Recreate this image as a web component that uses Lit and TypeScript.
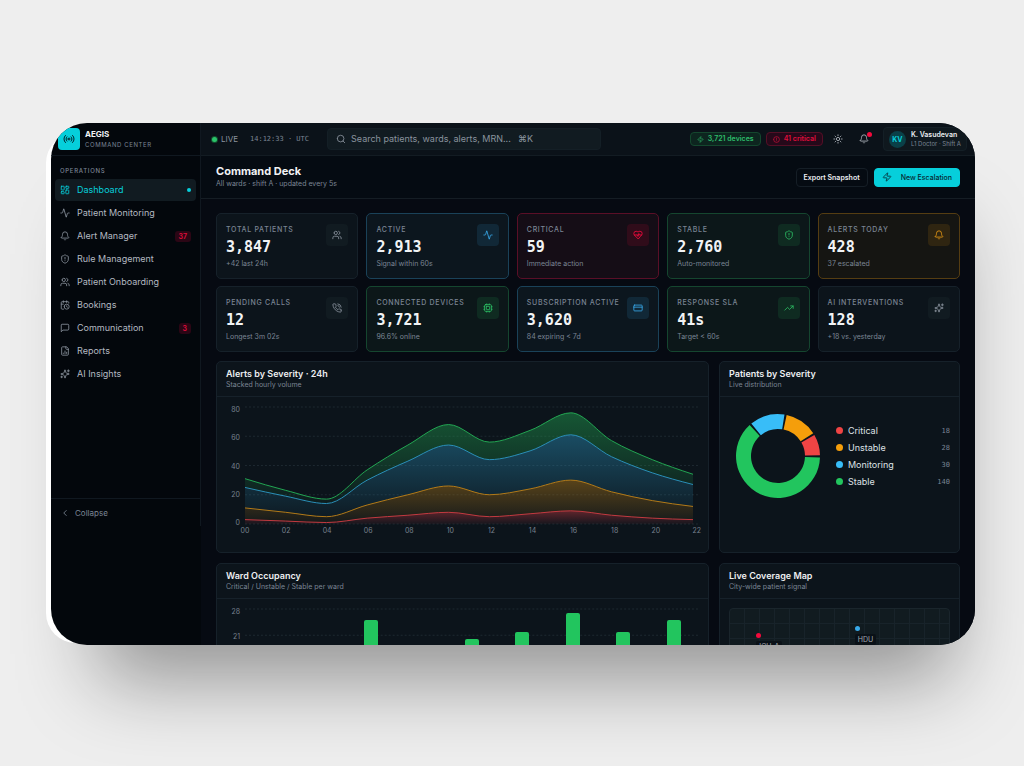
import { css, html, svg, LitElement } from 'lit';
import { customElement, property, state } from 'lit/decorators.js';
import { classMap } from 'lit/directives/class-map.js';

const ICONS: Record<string, string[]> = {
  radio: [
    'M4.9 19.1C1 15.2 1 8.8 4.9 4.9', 'M7.8 16.2c-2.3-2.3-2.3-6.1 0-8.5',
    'M10 12a2 2 0 1 0 4 0a2 2 0 1 0-4 0',
    'M16.2 7.8c2.3 2.3 2.3 6.1 0 8.5', 'M19.1 4.9C23 8.8 23 15.1 19.1 19',
  ],
  dashboard: [
    'M4 3h5a1 1 0 0 1 1 1v7a1 1 0 0 1-1 1H4a1 1 0 0 1-1-1V4a1 1 0 0 1 1-1z',
    'M15 3h5a1 1 0 0 1 1 1v3a1 1 0 0 1-1 1h-5a1 1 0 0 1-1-1V4a1 1 0 0 1 1-1z',
    'M15 12h5a1 1 0 0 1 1 1v7a1 1 0 0 1-1 1h-5a1 1 0 0 1-1-1v-7a1 1 0 0 1 1-1z',
    'M4 16h5a1 1 0 0 1 1 1v3a1 1 0 0 1-1 1H4a1 1 0 0 1-1-1v-3a1 1 0 0 1 1-1z',
  ],
  activity: ['M22 12h-2.48a2 2 0 0 0-1.93 1.46l-2.35 8.36a.25.25 0 0 1-.48 0L9.24 2.18a.25.25 0 0 0-.48 0l-2.35 8.36A2 2 0 0 1 4.49 12H2'],
  bell: [
    'M10.268 21a2 2 0 0 0 3.464 0',
    'M3.262 15.326A1 1 0 0 0 4 17h16a1 1 0 0 0 .74-1.673C19.41 13.956 18 12.499 18 8A6 6 0 0 0 6 8c0 4.499-1.411 5.956-2.738 7.326',
  ],
  shield: [
    'M20 13c0 5-3.5 7.5-7.66 8.95a1 1 0 0 1-.67-.01C7.5 20.5 4 18 4 13V6a1 1 0 0 1 1-1c2 0 4.5-1.2 6.24-2.72a1.17 1.17 0 0 1 1.52 0C14.51 3.81 17 5 19 5a1 1 0 0 1 1 1z',
    'M12 8v4', 'M12 16h.01',
  ],
  users: [
    'M16 21v-2a4 4 0 0 0-4-4H6a4 4 0 0 0-4 4v2', 'M5 7a4 4 0 1 0 8 0a4 4 0 1 0-8 0',
    'M22 21v-2a4 4 0 0 0-3-3.87', 'M16 3.13a4 4 0 0 1 0 7.75',
  ],
  calendar: [
    'M16 14v2.2l1.6 1', 'M16 2v4', 'M21 7.5V6a2 2 0 0 0-2-2H5a2 2 0 0 0-2 2v14a2 2 0 0 0 2 2h3.5',
    'M3 10h5', 'M8 2v4', 'M10 16a6 6 0 1 0 12 0a6 6 0 1 0-12 0',
  ],
  message: ['M21 15a2 2 0 0 1-2 2H7l-4 4V5a2 2 0 0 1 2-2h14a2 2 0 0 1 2 2z'],
  report: [
    'M15 2H6a2 2 0 0 0-2 2v16a2 2 0 0 0 2 2h12a2 2 0 0 0 2-2V7Z', 'M14 2v4a2 2 0 0 0 2 2h4',
    'M8 18v-1', 'M12 18v-6', 'M16 18v-3',
  ],
  sparkles: [
    'M9.937 15.5A2 2 0 0 0 8.5 14.063l-6.135-1.582a.5.5 0 0 1 0-.962L8.5 9.936A2 2 0 0 0 9.937 8.5l1.582-6.135a.5.5 0 0 1 .963 0L14.063 8.5A2 2 0 0 0 15.5 9.937l6.135 1.581a.5.5 0 0 1 0 .964L15.5 14.063a2 2 0 0 0-1.437 1.437l-1.582 6.135a.5.5 0 0 1-.963 0z',
    'M20 2v5', 'M22.5 4.5h-5', 'M4 17v4', 'M6 19H2',
  ],
  phone: [
    'M22 16.92v3a2 2 0 0 1-2.18 2 19.79 19.79 0 0 1-8.63-3.07 19.5 19.5 0 0 1-6-6 19.79 19.79 0 0 1-3.07-8.67A2 2 0 0 1 4.11 2h3a2 2 0 0 1 2 1.72 12.84 12.84 0 0 0 .7 2.81 2 2 0 0 1-.45 2.11L8.09 9.91a16 16 0 0 0 6 6l1.27-1.27a2 2 0 0 1 2.11-.45 12.84 12.84 0 0 0 2.81.7A2 2 0 0 1 22 16.92z',
    'M14.05 2a9 9 0 0 1 8 7.94', 'M14.05 6A5 5 0 0 1 18 10',
  ],
  cpu: [
    'M6 4h12a2 2 0 0 1 2 2v12a2 2 0 0 1-2 2H6a2 2 0 0 1-2-2V6a2 2 0 0 1 2-2z',
    'M9 8h6a1 1 0 0 1 1 1v6a1 1 0 0 1-1 1H9a1 1 0 0 1-1-1V9a1 1 0 0 1 1-1z',
    'M9 2v2', 'M15 2v2', 'M9 20v2', 'M15 20v2', 'M2 9h2', 'M2 15h2', 'M20 9h2', 'M20 15h2',
  ],
  heart: [
    'M19 14c1.49-1.46 3-3.21 3-5.5A5.5 5.5 0 0 0 16.5 3c-1.76 0-3 .5-4.5 2-1.5-1.5-2.74-2-4.5-2A5.5 5.5 0 0 0 2 8.5c0 2.3 1.5 4.05 3 5.5l7 7Z',
    'M3.22 12H9.5l.5-1 2 4.5 2-7 1.5 3.5h5.27',
  ],
  card: ['M4 5h16a2 2 0 0 1 2 2v10a2 2 0 0 1-2 2H4a2 2 0 0 1-2-2V7a2 2 0 0 1 2-2z', 'M2 10h20'],
  trend: ['M22 7 13.5 15.5 8.5 10.5 2 17', 'M16 7h6v6'],
  zap: ['M4 14a1 1 0 0 1-.78-1.63l9.9-10.2a.5.5 0 0 1 .86.46l-1.92 6.02A1 1 0 0 0 13 10h7a1 1 0 0 1 .78 1.63l-9.9 10.2a.5.5 0 0 1-.86-.46l1.92-6.02A1 1 0 0 0 11 14z'],
  alert: ['M2 12a10 10 0 1 0 20 0a10 10 0 1 0-20 0', 'M12 7v5', 'M12 16h.01'],
  sun: [
    'M8 12a4 4 0 1 0 8 0a4 4 0 1 0-8 0', 'M12 2v2', 'M12 20v2', 'm4.93 4.93 1.41 1.41',
    'm17.66 17.66 1.41 1.41', 'M2 12h2', 'M20 12h2', 'm6.34 17.66-1.41 1.41', 'm19.07 4.93-1.41 1.41',
  ],
  search: ['M3 11a8 8 0 1 0 16 0a8 8 0 1 0-16 0', 'm21 21-4.3-4.3'],
  chevron: ['m15 18-6-6 6-6'],
};

@customElement('app-icon')
export class AppIcon extends LitElement {
  static styles = css`
    :host {
      display: inline-flex;
      flex: none;
      width: 10px;
      height: 10px;
    }

    svg {
      width: 100%;
      height: 100%;
      fill: none;
      stroke: currentColor;
      stroke-width: 2;
      stroke-linecap: round;
      stroke-linejoin: round;
      overflow: visible;
    }
  `;

  @property() name = '';

  render() {
    return html`
      <svg viewBox="0 0 24 24" aria-hidden="true">
        ${(ICONS[this.name] ?? []).map(d => svg`<path d=${d}></path>`)}
      </svg>
    `;
  }
}

@customElement('stat-card')
export class StatCard extends LitElement {
  static styles = css`
    :host {
      --tone: 110, 130, 145;
      box-sizing: border-box;
      display: flex;
      justify-content: space-between;
      min-width: 0;
      height: 66px;
      padding: 10px 9px;
      border: 1px solid #16212a;
      border-radius: 5px;
      background: #0c141b;
      color: #7b8594;
    }

    :host([tone='info']) {
      --tone: 56, 170, 235;
      border-color: #1a4259;
      background: #0c161e;
    }

    :host([tone='danger']) {
      --tone: 244, 10, 60;
      border-color: #5a0f27;
      background: #150d16;
    }

    :host([tone='ok']) {
      --tone: 44, 190, 100;
      border-color: #15462f;
      background: #0c1719;
    }

    :host([tone='warn']) {
      --tone: 235, 155, 20;
      border-color: #553d12;
      background: #151512;
    }

    .text {
      display: flex;
      flex-direction: column;
      min-width: 0;
      white-space: nowrap;
    }

    .label {
      font-size: 7px;
      line-height: 12px;
      font-weight: 500;
      letter-spacing: 0.7px;
      text-transform: uppercase;
    }

    .value {
      margin-top: 1px;
      font-family: 'DejaVu Sans Mono', monospace;
      font-size: 15px;
      line-height: 20px;
      font-weight: 700;
      color: #f1f3f5;
    }

    .note {
      font-size: 7px;
      line-height: 14px;
    }

    .badge {
      display: flex;
      flex: none;
      align-items: center;
      justify-content: center;
      width: 22px;
      height: 22px;
      border-radius: 4px;
      background: rgba(var(--tone), 0.12);
      color: rgb(var(--tone));
    }

    :host(:not([tone])) .badge {
      background: #111b21;
      color: #8a939e;
    }
  `;

  @property() label = '';
  @property() value = '';
  @property() note = '';
  @property() icon = '';
  @property({ reflect: true }) tone?: string;

  render() {
    return html`
      <div class="text">
        <span class="label">${this.label}</span>
        <span class="value">${this.value}</span>
        <span class="note">${this.note}</span>
      </div>
      <span class="badge"><app-icon name=${this.icon}></app-icon></span>
    `;
  }
}

@customElement('deck-panel')
export class DeckPanel extends LitElement {
  static styles = css`
    :host {
      box-sizing: border-box;
      display: block;
      min-width: 0;
      min-height: 192px;
      border: 1px solid #16212a;
      border-radius: 5px;
      background: #0c141b;
    }

    .head {
      padding: 6px 9px;
      border-bottom: 1px solid #16212a;
    }

    .title {
      margin: 0;
      font-size: 9px;
      line-height: 12px;
      font-weight: 600;
      color: #eceef1;
    }

    .note {
      margin: 0;
      font-size: 7px;
      line-height: 10px;
      color: #7b8594;
    }

    .body {
      padding: 9px;
    }
  `;

  @property() heading = '';
  @property() note = '';

  render() {
    return html`
      <div class="head">
        <h2 class="title">${this.heading}</h2>
        <p class="note">${this.note}</p>
      </div>
      <div class="body"><slot></slot></div>
    `;
  }
}

const PLOT_W = 455;
const PLOT_H = 117;

// running totals per two hours, drawn top layer last
const LAYERS = [
  { id: 'stable', color: '#22a552', totals: [31, 23, 17, 37, 54, 68, 56, 64, 76, 57, 44, 34] },
  { id: 'monitoring', color: '#2a8fb8', totals: [25, 19, 14, 30, 43, 54, 44, 50, 61, 46, 35, 27] },
  { id: 'unstable', color: '#b27a18', totals: [11, 8, 5, 13, 20, 26, 20, 24, 30, 22, 16, 12] },
  { id: 'critical', color: '#c23a40', totals: [3, 2, 1, 4, 6, 8, 5, 7, 9, 6, 4, 3] },
];

type Point = [number, number];

const toPoints = (totals: number[]): Point[] =>
  totals.map((v, i) => [(i * 449) / 11, PLOT_H - (v * PLOT_H) / 80]);

// monotone cubic segments through the points
function curve(pts: Point[]): string {
  const n = pts.length;
  const slope = (i: number) => (pts[i + 1][1] - pts[i][1]) / (pts[i + 1][0] - pts[i][0]);
  const tangents = pts.map((_, i) => {
    if (i === 0 || i === n - 1) {
      return 0;
    }
    const a = slope(i - 1);
    const b = slope(i);
    return (Math.sign(a) + Math.sign(b)) * Math.min(Math.abs(a), Math.abs(b), 0.25 * Math.abs(a + b));
  });
  tangents[0] = (3 * slope(0) - tangents[1]) / 2;
  tangents[n - 1] = (3 * slope(n - 2) - tangents[n - 2]) / 2;
  let d = '';
  for (let i = 1; i < n; i++) {
    const [x0, y0] = pts[i - 1];
    const [x1, y1] = pts[i];
    const dx = (x1 - x0) / 3;
    d += `C${x0 + dx},${y0 + dx * tangents[i - 1]} ${x1 - dx},${y1 - dx * tangents[i]} ${x1},${y1}`;
  }
  return d;
}

const start = (pts: Point[]) => `${pts[0][0]},${pts[0][1]}`;

function band(top: Point[], bottom?: Point[]): string {
  if (!bottom) {
    return `M${start(top)}${curve(top)}L449,${PLOT_H}L0,${PLOT_H}Z`;
  }
  const back = [...bottom].reverse();
  return `M${start(top)}${curve(top)}L${start(back)}${curve(back)}Z`;
}

@customElement('severity-chart')
export class SeverityChart extends LitElement {
  static styles = css`
    :host {
      display: grid;
      grid-template-columns: 14px 1fr;
      column-gap: 5px;
      font-size: 7px;
      line-height: 8px;
      color: #77818e;
    }

    .y-axis {
      display: flex;
      flex-direction: column;
      justify-content: space-between;
      height: 121px;
      text-align: right;
    }

    .plot {
      width: 100%;
      height: 117px;
      margin-top: 1px;
      overflow: visible;
    }

    .x-axis {
      grid-column: 2;
      display: flex;
      justify-content: space-between;
      margin: 0 -3px 0 -5px;
    }

    .x-axis span {
      width: 10px;
      text-align: center;
    }

    .grid {
      stroke: #1d2830;
      stroke-dasharray: 2 2;
    }
  `;

  render() {
    const hours = LAYERS[0].totals.map((_, i) => String(i * 2).padStart(2, '0'));
    return html`
      <div class="y-axis">${[80, 60, 40, 20, 0].map(v => html`<span>${v}</span>`)}</div>
      <svg class="plot" viewBox="0 0 ${PLOT_W} ${PLOT_H}" preserveAspectRatio="none" role="img" aria-label="Alerts by severity">
        ${[0, 1, 2, 3, 4].map(i => svg`
          <line class="grid" x1="0" x2=${PLOT_W} y1=${(i * PLOT_H) / 4} y2=${(i * PLOT_H) / 4}></line>
        `)}
        ${LAYERS.map((layer, i) => {
          const top = toPoints(layer.totals);
          const below = LAYERS[i + 1] && toPoints(LAYERS[i + 1].totals);
          return svg`
            <linearGradient id=${layer.id} x1="0" y1="0" x2="0" y2="1">
              <stop offset="0" stop-color=${layer.color} stop-opacity="0.46"></stop>
              <stop offset="1" stop-color=${layer.color} stop-opacity="0.06"></stop>
            </linearGradient>
            <path d=${band(top, below)} fill="url(#${layer.id})"></path>
            <path d="M${start(top)}${curve(top)}" fill="none" stroke=${layer.color} vector-effect="non-scaling-stroke"></path>
          `;
        })}
      </svg>
      <div class="x-axis">${hours.map(h => html`<span>${h}</span>`)}</div>
    `;
  }
}

@customElement('ward-chart')
export class WardChart extends LitElement {
  static styles = css`
    :host {
      display: grid;
      grid-template-columns: 14px 1fr;
      column-gap: 5px;
      font-size: 7px;
      line-height: 8px;
      color: #77818e;
    }

    .y-axis {
      display: flex;
      flex-direction: column;
      justify-content: space-between;
      height: 109px;
      text-align: right;
    }

    .plot {
      display: grid;
      height: 105px;
      margin-top: 1px;
    }

    .lines, .bars {
      grid-area: 1 / 1;
      width: 100%;
      height: 105px;
    }

    .lines {
      overflow: visible;
      stroke: #1d2830;
      stroke-dasharray: 2 2;
    }

    .bars {
      display: flex;
      align-items: flex-end;
      justify-content: space-around;
    }

    .bar {
      width: 14px;
      border-radius: 2px 2px 0 0;
      background: #22c55e;
    }
  `;

  @property({ attribute: false }) wards = [18, 14, 25, 16, 20, 22, 27, 22, 25];

  render() {
    return html`
      <div class="y-axis">${[28, 21, 14, 7, 0].map(v => html`<span>${v}</span>`)}</div>
      <div class="plot">
        <svg class="lines" viewBox="0 0 455 105" preserveAspectRatio="none" aria-hidden="true">
          ${[0, 1, 2, 3, 4].map(i => svg`<line x1="0" x2="455" y1=${i * 26.25} y2=${i * 26.25}></line>`)}
        </svg>
        <div class="bars">
          ${this.wards.map(w => html`<div class="bar" style="height: ${(w / 28) * 100}%"></div>`)}
        </div>
      </div>
    `;
  }
}

const SEVERITIES = [
  { name: 'Critical', count: 18, color: '#ef4444' },
  { name: 'Unstable', count: 28, color: '#f59e0b' },
  { name: 'Monitoring', count: 30, color: '#38bdf8' },
  { name: 'Stable', count: 140, color: '#22c55e' },
];

@customElement('severity-donut')
export class SeverityDonut extends LitElement {
  static styles = css`
    :host {
      display: flex;
      align-items: center;
      gap: 7px;
    }

    .donut {
      flex: none;
      width: 100px;
      height: 100px;
    }

    .legend {
      flex: 1;
      display: flex;
      flex-direction: column;
      gap: 5px;
      margin: 0;
      padding: 0;
      list-style: none;
      font-size: 9px;
      line-height: 12px;
      color: #dfe2e6;
    }

    .row {
      display: flex;
      align-items: center;
      gap: 5px;
    }

    .dot {
      width: 7px;
      height: 7px;
      border-radius: 50%;
    }

    .count {
      margin-left: auto;
      font-family: 'DejaVu Sans Mono', monospace;
      font-size: 7px;
      color: #7b8594;
    }
  `;

  _slices() {
    const total = SEVERITIES.reduce((sum, s) => sum + s.count, 0);
    const pad = 3;
    const span = 360 - pad * SEVERITIES.length;
    let angle = 1;
    return SEVERITIES.map(s => {
      const sweep = (s.count / total) * span;
      const d = this._ring(angle, angle + sweep);
      angle += sweep + pad;
      return { d, color: s.color };
    });
  }

  _ring(from: number, to: number) {
    const at = (deg: number, r: number) => {
      const a = (-deg * Math.PI) / 180;
      return `${49 + r * Math.cos(a)},${50 + r * Math.sin(a)}`;
    };
    const large = to - from > 180 ? 1 : 0;
    return `M${at(from, 42)}A42,42 0 ${large} 0 ${at(to, 42)}L${at(to, 27)}A27,27 0 ${large} 1 ${at(from, 27)}Z`;
  }

  render() {
    return html`
      <svg class="donut" viewBox="0 0 100 100" role="img" aria-label="Patients by severity">
        ${this._slices().map(s => svg`<path d=${s.d} fill=${s.color}></path>`)}
      </svg>
      <ul class="legend">
        ${SEVERITIES.map(s => html`
          <li class="row">
            <span class="dot" style="background: ${s.color}"></span>
            ${s.name}
            <span class="count">${s.count}</span>
          </li>
        `)}
      </ul>
    `;
  }
}

@customElement('coverage-map')
export class CoverageMap extends LitElement {
  static styles = css`
    :host {
      box-sizing: border-box;
      display: block;
      position: relative;
      height: 146px;
      border: 1px solid #1a252c;
      border-radius: 4px;
      background:
        repeating-linear-gradient(to right, transparent 0 14px, #18232a 14px 15px),
        repeating-linear-gradient(to bottom, transparent 0 14px, #18232a 14px 15px),
        #111b20;
    }

    .pin {
      position: absolute;
    }

    .dot {
      width: 5px;
      height: 5px;
      border-radius: 50%;
    }

    .tag {
      position: absolute;
      top: 8px;
      left: 0;
      padding: 1px 3px;
      border-radius: 2px;
      background: #0a1117;
      font-size: 7px;
      line-height: 9px;
      color: #a3aab3;
      white-space: nowrap;
    }
  `;

  @property({ attribute: false }) pins = [
    { name: 'ICU-A', x: 12, y: 17, color: '#f40a3c' },
    { name: 'HDU', x: 57, y: 12, color: '#38a9e8' },
  ];

  render() {
    return this.pins.map(p => html`
      <div class="pin" style="left: ${p.x}%; top: ${p.y}%">
        <div class="dot" style="background: ${p.color}"></div>
        <span class="tag">${p.name}</span>
      </div>
    `);
  }
}

const NAV = [
  { icon: 'dashboard', label: 'Dashboard' },
  { icon: 'activity', label: 'Patient Monitoring' },
  { icon: 'bell', label: 'Alert Manager', count: 37 },
  { icon: 'shield', label: 'Rule Management' },
  { icon: 'users', label: 'Patient Onboarding' },
  { icon: 'calendar', label: 'Bookings' },
  { icon: 'message', label: 'Communication', count: 3 },
  { icon: 'report', label: 'Reports' },
  { icon: 'sparkles', label: 'AI Insights' },
];

const STATS = [
  { label: 'Total Patients', value: '3,847', note: '+42 last 24h', icon: 'users' },
  { label: 'Active', value: '2,913', note: 'Signal within 60s', icon: 'activity', tone: 'info' },
  { label: 'Critical', value: '59', note: 'Immediate action', icon: 'heart', tone: 'danger' },
  { label: 'Stable', value: '2,760', note: 'Auto-monitored', icon: 'shield', tone: 'ok' },
  { label: 'Alerts Today', value: '428', note: '37 escalated', icon: 'bell', tone: 'warn' },
  { label: 'Pending Calls', value: '12', note: 'Longest 3m 02s', icon: 'phone' },
  { label: 'Connected Devices', value: '3,721', note: '96.6% online', icon: 'cpu', tone: 'ok' },
  { label: 'Subscription Active', value: '3,620', note: '84 expiring < 7d', icon: 'card', tone: 'info' },
  { label: 'Response SLA', value: '41s', note: 'Target < 60s', icon: 'trend', tone: 'ok' },
  { label: 'AI Interventions', value: '128', note: '+18 vs. yesterday', icon: 'sparkles' },
];

@customElement('app-root')
export class AppRoot extends LitElement {
  static styles = css`
    :host {
      box-sizing: border-box;
      display: block;
      height: 100vh;
      padding: 123px 49px 121px 51px;
      background: #eeeeee;
      font-family: Inter, 'Liberation Sans', sans-serif;
      color: #b3b9c1;
    }

    button, input {
      font: inherit;
      color: inherit;
      margin: 0;
      padding: 0;
      border: 0;
      background: none;
    }

    .window {
      display: grid;
      grid-template-columns: 150px 1fr;
      grid-template-rows: 100%;
      height: 100%;
      border-radius: 36px;
      background: #03070c;
      box-shadow: -11px 4px 0 -6px #ffffff, 12px 70px 80px -35px rgba(0, 0, 0, 0.38);
      overflow: hidden;
    }

    .sidebar {
      align-self: start;
      display: flex;
      flex-direction: column;
      border-right: 1px solid #101820;
    }

    .brand {
      box-sizing: border-box;
      display: flex;
      align-items: center;
      gap: 5px;
      height: 33px;
      padding: 0 7px;
      border-bottom: 1px solid #101820;
    }

    .logo {
      display: flex;
      align-items: center;
      justify-content: center;
      width: 22px;
      height: 22px;
      border-radius: 4px;
      background: #06cfdb;
      color: #05222a;
    }

    .logo app-icon {
      width: 12px;
      height: 12px;
    }

    .brand-name {
      font-size: 8px;
      line-height: 11px;
      font-weight: 700;
      color: #f1f3f5;
    }

    .brand-note {
      font-size: 6px;
      line-height: 10px;
      letter-spacing: 0.6px;
      color: #7b8594;
    }

    .nav {
      box-sizing: border-box;
      display: flex;
      flex-direction: column;
      gap: 1px;
      min-height: 342px;
      padding: 9px 4px;
    }

    .nav-title {
      margin: 0 0 1px;
      padding: 0 5px;
      font-size: 6px;
      line-height: 12px;
      font-weight: 500;
      letter-spacing: 0.7px;
      color: #7b8594;
    }

    .nav-item {
      display: flex;
      align-items: center;
      gap: 7px;
      height: 22px;
      padding: 0 5px;
      border-radius: 4px;
      font-size: 9px;
      line-height: 12px;
      text-decoration: none;
      color: #b3b9c1;
    }

    .nav-item app-icon {
      color: #8a939e;
    }

    .nav-item.active {
      background: #111b21;
      color: #06cfdb;
    }

    .nav-item.active app-icon {
      color: inherit;
    }

    .nav-item.active::after {
      content: '';
      width: 4px;
      height: 4px;
      margin-left: auto;
      border-radius: 50%;
      background: #06cfdb;
    }

    .count {
      margin-left: auto;
      padding: 0 4px;
      border-radius: 3px;
      background: #2b0615;
      font-size: 7px;
      line-height: 11px;
      font-weight: 600;
      color: #e00d3c;
    }

    .collapse {
      display: flex;
      align-items: center;
      gap: 5px;
      height: 28px;
      padding: 0 9px;
      border-top: 1px solid #101820;
      font-size: 8px;
      color: #7b8594;
      cursor: pointer;
    }

    .main {
      min-width: 0;
      background: #060a12;
      overflow-y: auto;
      scrollbar-width: none;
    }

    .topbar {
      box-sizing: border-box;
      display: flex;
      align-items: center;
      height: 33px;
      padding: 0 8px 0 9px;
      border-bottom: 1px solid #131c23;
      background: #0b1219;
      white-space: nowrap;
    }

    .live {
      display: flex;
      align-items: center;
      gap: 4px;
      padding-left: 2px;
      font-size: 8px;
      line-height: 10px;
      color: #8a939e;
    }

    .live::before {
      content: '';
      width: 5px;
      height: 5px;
      border-radius: 50%;
      background: #2bc46a;
      box-shadow: 0 0 0 1px #14512f;
    }

    .clock {
      margin: 0 18px 0 12px;
      font-family: 'DejaVu Sans Mono', monospace;
      font-size: 7px;
      color: #7b8594;
    }

    .search {
      box-sizing: border-box;
      display: flex;
      flex: 0 1 274px;
      align-items: center;
      gap: 5px;
      height: 22px;
      padding: 0 8px;
      border: 1px solid #141f26;
      border-radius: 4px;
      background: #111b21;
      font-size: 9px;
      line-height: 12px;
      color: #8a939e;
    }

    .search input {
      width: 162px;
      height: 12px;
      outline: none;
    }

    .search input::placeholder {
      color: #8a939e;
    }

    .search kbd {
      font: inherit;
    }

    .actions {
      display: flex;
      align-items: center;
      gap: 5px;
      margin-left: auto;
    }

    .pill {
      display: flex;
      align-items: center;
      gap: 4px;
      padding: 0 6px;
      border: 1px solid #14472e;
      border-radius: 4px;
      background: #0d251f;
      font-size: 7px;
      line-height: 12px;
      font-weight: 600;
      color: #2ebd6b;
    }

    .pill.danger {
      border-color: #540f26;
      background: #26091a;
      color: #e00d3c;
    }

    .pill app-icon {
      width: 7px;
      height: 7px;
    }

    .tool {
      position: relative;
      display: flex;
      align-items: center;
      justify-content: center;
      width: 21px;
      height: 21px;
      color: #b3b9c1;
      cursor: pointer;
    }

    .tool .dot {
      position: absolute;
      top: 3px;
      right: 3px;
      width: 5px;
      height: 5px;
      border-radius: 50%;
      background: #f40a3c;
    }

    .user {
      display: flex;
      align-items: center;
      gap: 5px;
      padding: 2px 5px;
      margin-left: 3px;
      border: 1px solid #141f26;
      border-radius: 4px;
      background: #0f181e;
    }

    .avatar {
      width: 17px;
      border-radius: 50%;
      background: #0a4048;
      font-size: 7px;
      line-height: 17px;
      font-weight: 700;
      text-align: center;
      color: #06cfdb;
    }

    .user-name {
      font-size: 7px;
      line-height: 10px;
      font-weight: 600;
      color: #eceef1;
    }

    .user-role {
      font-size: 6px;
      line-height: 8px;
      color: #7b8594;
    }

    .page-head {
      box-sizing: border-box;
      display: flex;
      align-items: center;
      gap: 6px;
      height: 43px;
      padding: 0 15px;
      border-bottom: 1px solid #151d24;
      background: #050b12;
    }

    .page-text {
      margin-right: auto;
    }

    .page-title {
      margin: 0;
      font-size: 11px;
      line-height: 14px;
      font-weight: 700;
      color: #f1f3f5;
    }

    .page-note {
      margin: 0;
      font-size: 7px;
      line-height: 12px;
      color: #7b8594;
    }

    .button {
      display: flex;
      align-items: center;
      gap: 9px;
      height: 19px;
      padding: 0 7px;
      border: 1px solid #151e26;
      border-radius: 4px;
      font-size: 7px;
      font-weight: 600;
      color: #eceef1;
      cursor: pointer;
    }

    .button.primary {
      border-color: #06cfdb;
      background: #06cfdb;
      font-weight: 500;
      color: #062a33;
    }

    .content {
      display: flex;
      flex-direction: column;
      gap: 9px;
      padding: 14px 15px;
    }

    .stats {
      display: grid;
      grid-template-columns: repeat(5, 1fr);
      gap: 7px 8px;
    }

    .panels {
      display: grid;
      grid-template-columns: minmax(0, 45fr) minmax(0, 22fr);
      gap: 10px;
    }
  `;

  @state() active = 'Dashboard';

  _select(e: Event, label: string) {
    e.preventDefault();
    this.active = label;
  }

  _renderSidebar() {
    return html`
      <aside class="sidebar">
        <div class="brand">
          <span class="logo"><app-icon name="radio"></app-icon></span>
          <div>
            <div class="brand-name">AEGIS</div>
            <div class="brand-note">COMMAND CENTER</div>
          </div>
        </div>
        <nav class="nav">
          <p class="nav-title">OPERATIONS</p>
          ${NAV.map(item => html`
            <a
              href="#"
              class=${classMap({ 'nav-item': true, active: item.label === this.active })}
              @click=${(e: Event) => this._select(e, item.label)}
            >
              <app-icon name=${item.icon}></app-icon>
              ${item.label}
              ${item.count ? html`<span class="count">${item.count}</span>` : ''}
            </a>
          `)}
        </nav>
        <button class="collapse"><app-icon name="chevron"></app-icon>Collapse</button>
      </aside>
    `;
  }

  _renderTopbar() {
    return html`
      <header class="topbar">
        <span class="live">LIVE</span>
        <span class="clock">14:12:33 · UTC</span>
        <label class="search">
          <app-icon name="search"></app-icon>
          <input type="text" aria-label="Search" placeholder="Search patients, wards, alerts, MRN...">
          <kbd>⌘K</kbd>
        </label>
        <div class="actions">
          <span class="pill"><app-icon name="zap"></app-icon>3,721 devices</span>
          <span class="pill danger"><app-icon name="alert"></app-icon>41 critical</span>
          <button class="tool" aria-label="Theme"><app-icon name="sun"></app-icon></button>
          <button class="tool" aria-label="Notifications">
            <app-icon name="bell"></app-icon>
            <span class="dot"></span>
          </button>
          <div class="user">
            <span class="avatar">KV</span>
            <div>
              <div class="user-name">K. Vasudevan</div>
              <div class="user-role">L1 Doctor · Shift A</div>
            </div>
          </div>
        </div>
      </header>
    `;
  }

  render() {
    return html`
      <div class="window">
        ${this._renderSidebar()}
        <main class="main">
          ${this._renderTopbar()}
          <div class="page-head">
            <div class="page-text">
              <h1 class="page-title">Command Deck</h1>
              <p class="page-note">All wards · shift A · updated every 5s</p>
            </div>
            <button class="button">Export Snapshot</button>
            <button class="button primary"><app-icon name="zap"></app-icon>New Escalation</button>
          </div>
          <div class="content">
            <section class="stats">
              ${STATS.map(s => html`
                <stat-card label=${s.label} value=${s.value} note=${s.note} icon=${s.icon} .tone=${s.tone}></stat-card>
              `)}
            </section>
            <section class="panels">
              <deck-panel heading="Alerts by Severity · 24h" note="Stacked hourly volume">
                <severity-chart></severity-chart>
              </deck-panel>
              <deck-panel heading="Patients by Severity" note="Live distribution">
                <severity-donut></severity-donut>
              </deck-panel>
              <deck-panel heading="Ward Occupancy" note="Critical / Unstable / Stable per ward">
                <ward-chart></ward-chart>
              </deck-panel>
              <deck-panel heading="Live Coverage Map" note="City-wide patient signal">
                <coverage-map></coverage-map>
              </deck-panel>
            </section>
          </div>
        </main>
      </div>
    `;
  }
}
